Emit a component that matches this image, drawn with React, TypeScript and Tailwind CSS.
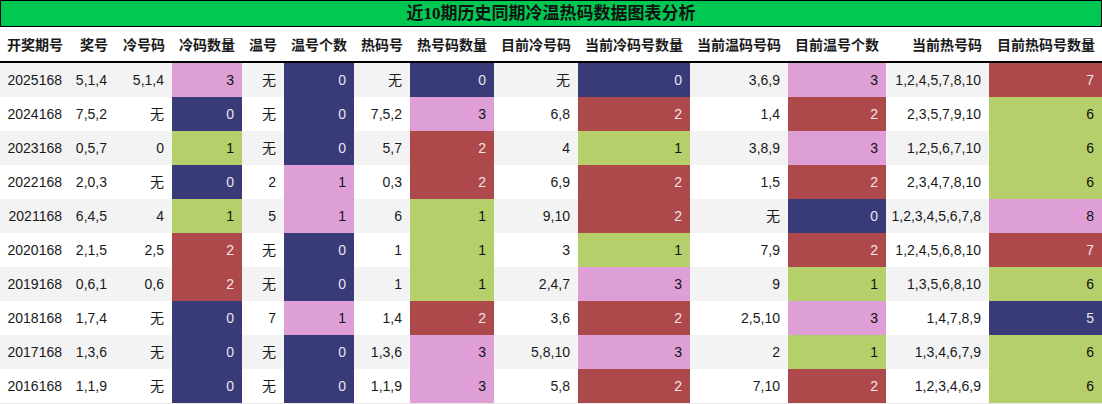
import React from "react";

const headers = [
  "开奖期号", "奖号", "冷号码", "冷码数量", "温号", "温号个数", "热码号",
  "热号码数量", "目前冷号码", "当前冷码号数量", "当前温码号码", "目前温号个数", "当前热号码", "目前热码号数量",
];

const rows: string[][] = [
  ["2025168", "5,1,4", "5,1,4", "3", "无", "0", "无", "0", "无", "0", "3,6,9", "3", "1,2,4,5,7,8,10", "7"],
  ["2024168", "7,5,2", "无", "0", "无", "0", "7,5,2", "3", "6,8", "2", "1,4", "2", "2,3,5,7,9,10", "6"],
  ["2023168", "0,5,7", "0", "1", "无", "0", "5,7", "2", "4", "1", "3,8,9", "3", "1,2,5,6,7,10", "6"],
  ["2022168", "2,0,3", "无", "0", "2", "1", "0,3", "2", "6,9", "2", "1,5", "2", "2,3,4,7,8,10", "6"],
  ["2021168", "6,4,5", "4", "1", "5", "1", "6", "1", "9,10", "2", "无", "0", "1,2,3,4,5,6,7,8", "8"],
  ["2020168", "2,1,5", "2,5", "2", "无", "0", "1", "1", "3", "1", "7,9", "2", "1,2,4,5,6,8,10", "7"],
  ["2019168", "0,6,1", "0,6", "2", "无", "0", "1", "1", "2,4,7", "3", "9", "1", "1,3,5,6,8,10", "6"],
  ["2018168", "1,7,4", "无", "0", "7", "1", "1,4", "2", "3,6", "2", "2,5,10", "3", "1,4,7,8,9", "5"],
  ["2017168", "1,3,6", "无", "0", "无", "0", "1,3,6", "3", "5,8,10", "3", "2", "1", "1,3,4,6,7,9", "6"],
  ["2016168", "1,1,9", "无", "0", "无", "0", "1,1,9", "3", "5,8", "2", "7,10", "2", "1,2,3,4,6,9", "6"],
];

// count columns: colour runs navy -> green -> red -> pink from the column's min to max
const countCols = [3, 5, 7, 9, 11, 13];
const palette = [
  "bg-[#393b79] text-[#e6e6ee]",
  "bg-[#b5cf6b] text-[#111]",
  "bg-[#ad494a] text-[#f3e6e6]",
  "bg-[#de9ed6] text-[#111]",
];

function colorFor(col: number, v: number) {
  const vals = rows.map((r) => Number(r[col]));
  const min = Math.min(...vals);
  const max = Math.max(...vals);
  if (max === min) return palette[0];
  const idx = Math.round(((v - min) / (max - min)) * 3);
  return palette[idx];
}

const cols = "grid grid-cols-[70px_45px_57px_70px_42px_70px_56px_84px_84px_112px_98px_98px_103px_113px]";

export default function App() {
  return (
    <div className="w-[1102px] h-[404px] bg-white overflow-hidden font-['Liberation_Sans','Noto_Sans_CJK_SC',sans-serif] text-[#1a1a1a]">
      <div className="h-[27px] border border-black bg-[#00c853] flex items-center justify-center">
        <h1 className="text-[17px] font-bold font-['Liberation_Serif','Noto_Sans_CJK_SC',serif] text-[#111]">
          近10期历史同期冷温热码数据图表分析
        </h1>
      </div>
      <div className={`${cols} h-[36px] border-b-2 border-black items-center`}>
        {headers.map((h) => (
          <div key={h} className="text-right pr-[7px] text-[14px] font-bold font-['Noto_Sans_CJK_SC',sans-serif] whitespace-nowrap">
            {h}
          </div>
        ))}
      </div>
      <div className="border-b border-[#e8e8e8]">
        {rows.map((r, i) => (
          <div key={r[0]} className={`${cols} h-[34px] ${i % 2 === 0 ? "bg-[#f3f3f3]" : "bg-white"}`}>
            {r.map((c, j) => {
              const color = countCols.includes(j) ? colorFor(j, Number(c)) : "";
              return (
                <div key={j} className={`flex items-center justify-end pr-2 text-[14px] whitespace-nowrap ${color}`}>
                  {c}
                </div>
              );
            })}
          </div>
        ))}
      </div>
    </div>
  );
}
